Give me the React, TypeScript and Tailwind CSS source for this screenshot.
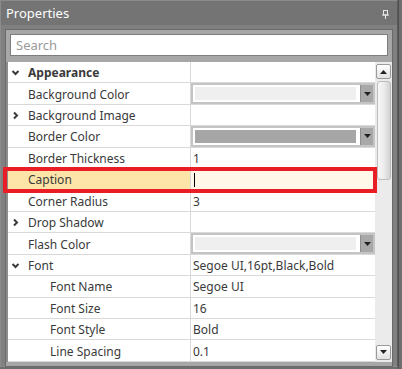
import React from "react";

type Row = {
  name: string;
  value?: string;
  level?: 0 | 1;
  expander?: "open" | "closed";
  bold?: boolean;
  swatch?: string;
  editing?: boolean;
};

const rows: Row[] = [
  { name: "Appearance", expander: "open", bold: true },
  { name: "Background Color", swatch: "#efefef" },
  { name: "Background Image", expander: "closed" },
  { name: "Border Color", swatch: "#a6a6a6" },
  { name: "Border Thickness", value: "1" },
  { name: "Caption", editing: true },
  { name: "Corner Radius", value: "3" },
  { name: "Drop Shadow", expander: "closed" },
  { name: "Flash Color", swatch: "#efefef" },
  { name: "Font", expander: "open", value: "Segoe UI,16pt,Black,Bold" },
  { name: "Font Name", level: 1, value: "Segoe UI" },
  { name: "Font Size", level: 1, value: "16" },
  { name: "Font Style", level: 1, value: "Bold" },
  { name: "Line Spacing", level: 1, value: "0.1" },
];

const Chevron = ({ open }: { open: boolean }) => (
  <svg width="9" height="9" viewBox="0 0 9 9" className="text-[#3a3a3a]">
    {open ? (
      <polyline points="1.5,3 4.5,6 7.5,3" fill="none" stroke="currentColor" strokeWidth="2" />
    ) : (
      <polyline points="3,1.5 6,4.5 3,7.5" fill="none" stroke="currentColor" strokeWidth="2" />
    )}
  </svg>
);

const Arrow = ({ up }: { up?: boolean }) => (
  <svg width="7" height="4" viewBox="0 0 7 4">
    {up ? <polygon points="0,4 7,4 3.5,0" fill="#222" /> : <polygon points="0,0 7,0 3.5,4" fill="#222" />}
  </svg>
);

const ColorCombo = ({ color }: { color: string }) => (
  <div className="flex h-full w-full border-2 border-[#c4c4c4] bg-white">
    <div className="flex-1 p-[2px] pr-[4px]">
      <div className="h-full w-full" style={{ background: color }} />
    </div>
    <div className="flex w-[13px] items-center justify-center border-l border-[#8e8e8e] bg-[#a8a8a8]">
      <Arrow />
    </div>
  </div>
);

const PropRow = ({ row }: { row: Row }) => (
  <div
    className={`flex h-[21.43px] border-b border-[#d9d9d9] ${row.editing ? "bg-[#fff8e8]" : "bg-white"}`}
  >
    <div
      className={`flex w-[183px] shrink-0 items-center border-r border-[#d9d9d9] ${
        row.editing ? "bg-[#fde5a9]" : ""
      }`}
    >
      <div className="flex w-[20px] shrink-0 justify-start pl-[3px] pt-[1px]">
        {row.expander && <Chevron open={row.expander === "open"} />}
      </div>
      <span className={`pt-[2px] leading-[14px] ${row.level === 1 ? "pl-[22px]" : ""} ${row.bold ? "font-bold" : ""}`}>
        {row.name}
      </span>
    </div>
    <div className="flex min-w-0 flex-1 items-center">
      {row.swatch ? (
        <ColorCombo color={row.swatch} />
      ) : row.editing ? (
        <span className="ml-[3px] mt-[1px] h-[14px] w-px bg-black" />
      ) : (
        <span className="pl-[2px] pt-[2px] leading-[14px]">{row.value}</span>
      )}
    </div>
  </div>
);

export default function App() {
  return (
    <div
      className="flex h-[369px] w-[402px] overflow-hidden bg-[#6e6e6e] text-[12px] text-[#3a3a3a]"
      style={{ fontFamily: "'Noto Sans', 'Open Sans', sans-serif" }}
    >
      {/* Panel */}
      <div className="flex h-[367px] w-[398px] flex-col border border-[#8b8b8b] border-r-[#5a5a5a] bg-[#808080]">
        {/* Title */}
        <div className="flex h-[24px] shrink-0 items-center justify-between bg-[#747474] pl-[5px] pr-[8px] pt-[2px]">
          <span className="text-[13px] text-white">Properties</span>
          <svg width="7" height="9" viewBox="0 0 7 9">
            <rect x="1.5" y="0.5" width="4" height="4.5" fill="none" stroke="#e8e8e8" strokeWidth="1" />
            <rect x="0" y="4.5" width="7" height="1" fill="#e8e8e8" />
            <rect x="3" y="5" width="1" height="4" fill="#e8e8e8" />
          </svg>
        </div>
        <div className="px-[4px] pb-[4px] pt-[4px]">
          <div className="relative border border-[#6a6a6a] bg-[#a7a7a7] pb-[4px]">
            {/* Search */}
            <div className="px-[4px] pb-[6px] pt-[4px]">
              <div className="flex h-[22px] items-center border border-[#7d7d7d] bg-white px-[5px] pt-[1px] text-[13px] text-[#9a9a9a]">
                Search
              </div>
            </div>
            {/* Grid */}
            <div className="flex border-l-2 border-[#8d8d8d] bg-white">
              <div className="min-w-0 flex-1">
                {rows.map((r) => (
                  <PropRow key={r.name} row={r} />
                ))}
              </div>
              {/* Scrollbar */}
              <div className="flex w-[17px] shrink-0 flex-col items-center bg-[#ebebeb] pt-[2px] pb-[2px]">
                <div className="flex h-[15px] w-[15px] items-center justify-center rounded-[2px] border border-[#9a9a9a] bg-gradient-to-b from-white to-[#e2e2e2]">
                  <Arrow up />
                </div>
                <div className="mt-[2px] h-[99px] w-[14px] rounded-[3px] border border-[#bdbdbd] bg-gradient-to-r from-[#f7f7f7] via-[#ececec] to-[#d2d2d2]" />
                <div className="flex-1" />
                <div className="flex h-[15px] w-[15px] items-center justify-center rounded-[2px] border border-[#9a9a9a] bg-gradient-to-b from-white to-[#e2e2e2]">
                  <Arrow />
                </div>
              </div>
            </div>
            {/* Highlight */}
            <div className="pointer-events-none absolute left-[-3px] top-[137px] h-[26px] w-[374px] border-4 border-[#e81d25]" />
          </div>
        </div>
      </div>
      <div className="flex w-[4px] flex-col">
        <div className="h-full w-[1px] bg-[#4f4f4f]" />
      </div>
    </div>
  );
}
